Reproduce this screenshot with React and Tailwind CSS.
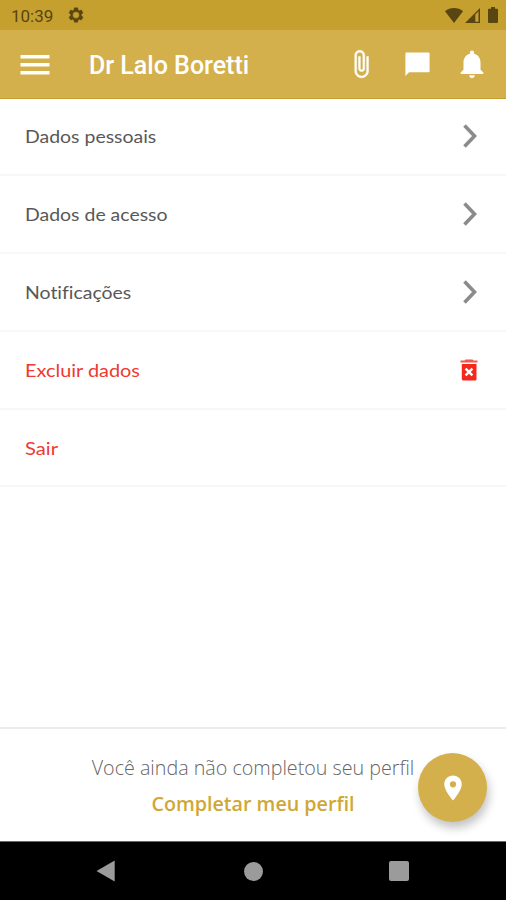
import React from "react";

const LATO = "font-['Lato','Noto_Sans',sans-serif]";

function Icon({ d, className, strokeWidth = 0 }) {
  return (
    <svg viewBox="0 0 24 24" fill="currentColor" stroke="currentColor" strokeWidth={strokeWidth} className={className} aria-hidden="true">
      <path d={d} />
    </svg>
  );
}

function StatusBar() {
  return (
    <div className="flex h-[30px] shrink-0 items-center bg-[#c6a02f] pl-[11px] pr-[8px] text-[#594510]">
      <span className="w-[45px] pt-[2px] text-[17px] leading-none whitespace-nowrap">10:39</span>
      <svg viewBox="0 0 24 24" className="ml-[11px] h-[18px] w-[18px]" fill="currentColor">
        <path
          fillRule="evenodd"
          stroke="currentColor"
          strokeWidth="0.600"
          d="M19.14 12.94a7.1 7.1 0 0 0 0-1.88l2.03-1.58a.5.5 0 0 0 .12-.61l-1.92-3.32a.49.49 0 0 0-.59-.22l-2.39.96a7 7 0 0 0-1.62-.94l-.36-2.54a.48.48 0 0 0-.48-.41h-3.84a.47.47 0 0 0-.47.41l-.36 2.54c-.59.24-1.13.57-1.62.94l-2.39-.96a.48.48 0 0 0-.59.22L2.74 8.87a.47.47 0 0 0 .12.61l2.03 1.58a7.1 7.1 0 0 0 0 1.88l-2.03 1.58a.5.5 0 0 0-.12.61l1.92 3.32c.12.22.37.29.59.22l2.39-.96c.5.38 1.03.7 1.62.94l.36 2.54c.05.24.24.41.48.41h3.84c.24 0 .44-.17.47-.41l.36-2.54a7 7 0 0 0 1.62-.94l2.39.96c.22.08.47 0 .59-.22l1.92-3.32a.47.47 0 0 0-.12-.61zM12 16.500a4.500 4.500 0 1 1 0-9 4.500 4.500 0 0 1 0 9z"
        />
      </svg>
      <div className="ml-auto flex items-center">
        <svg viewBox="0 0 18 15" className="h-[15px] w-[18px]" fill="currentColor">
          <path d="M9 15L0 3.2C2.5 1.1 5.600 0 9 0s6.500 1.100 9 3.200z" />
        </svg>
        <svg viewBox="0 0 16 16" className="ml-[2px] h-[15px] w-[15px]" fill="currentColor">
          <path fillRule="evenodd" d="M0 16L16 0v16zM11 6.800V14.600h3.400V3.400z" />
        </svg>
        <svg viewBox="0 0 10 16" className="ml-[8px] h-4 w-[10px]" fill="currentColor">
          <path d="M3 0h4v1.800h2q1 0 1 1V15q0 1-1 1H1q-1 0-1-1V2.800q0-1 1-1h2z" />
        </svg>
      </div>
    </div>
  );
}

function Header() {
  return (
    <header className="flex h-[69px] shrink-0 items-center border-b border-[#c6a02f] bg-[#d3b04c] pl-5 pr-[17px] text-white">
      <svg viewBox="0 0 30 20" className="mt-px h-5 w-[30px]" fill="currentColor">
        <rect x="0.500" y="0" width="29" height="3.600" rx="0.600" />
        <rect x="0.500" y="8" width="29" height="3.600" rx="0.600" />
        <rect x="0.500" y="16" width="29" height="3.600" rx="0.600" />
      </svg>
      <h1 className="ml-[39px] pt-[3px] text-[25px] leading-none font-medium whitespace-nowrap">Dr Lalo Boretti</h1>
      <div className="ml-auto flex items-center">
        <Icon
          className="h-[30px] w-[30px]"
          strokeWidth={0.35}
          d="M16.5 6v11.500c0 2.210-1.790 4-4 4s-4-1.790-4-4V5a2.500 2.500 0 0 1 5 0v10.500c0 .55-.45 1-1 1s-1-.45-1-1V6H10v9.500a2.500 2.500 0 0 0 5 0V5c0-2.210-1.790-4-4-4S7 2.790 7 5v12.500c0 3.040 2.460 5.500 5.500 5.500s5.500-2.460 5.500-5.500V6h-1.500z"
        />
        <Icon
          className="ml-[27px] h-[29px] w-[29px]"
          d="M21.300 2H2.700c-.4 0-.7.300-.7.700V21.500l3-3h16.300c.4 0 .7-.3.700-.7V2.700c0-.4-.3-.7-.7-.7z"
        />
        <Icon
          className="ml-[23px] h-[34px] w-[34px]"
          d="M12 22c1.100 0 2-.9 2-2h-4c0 1.100.89 2 2 2zm6-6v-5c0-3.070-1.640-5.640-4.500-6.320V4c0-.83-.67-1.500-1.500-1.500s-1.500.67-1.500 1.500v.68C7.630 5.360 6 7.920 6 11v5l-2 2v1h16v-1l-2-2z"
        />
      </div>
    </header>
  );
}

function Chevron() {
  return (
    <svg viewBox="0 0 14 24" className="h-6 w-[14px]" fill="none" stroke="#8b8b8b" strokeWidth="3.600">
      <path d="M1.500 1.500L11.500 12L1.500 22.500" />
    </svg>
  );
}

function Trash() {
  return (
    <svg viewBox="0 0 18 22" className="mr-[-1px] h-[22px] w-[18px]">
      <path d="M5.500 0.500h7l1 1H17.500v2H0.500v-2h4z" fill="#f4574f" />
      <path d="M1.800 5h14.700v15q0 1.500-1.500 1.500H3.300q-1.500 0-1.500-1.500z" fill="#f5281d" />
      <path d="M5.600 9.600l6.800 6.800M12.400 9.600l-6.800 6.800" stroke="#fff" strokeWidth="2.400" />
    </svg>
  );
}

function Row({ label, color, icon, stretch = "scale-x-[1.08]" }) {
  return (
    <div className={`flex h-[77.8px] items-center justify-between border-b-2 border-[#f7f7f7] pl-[25px] pr-[29px] ${color}`}>
      <span className={`${LATO} ${stretch} origin-left text-[18px] leading-none whitespace-nowrap [font-variant-ligatures:none]`}>
        {label}
      </span>
      {icon}
    </div>
  );
}

export default function App() {
  return (
    <div className="flex h-[900px] w-[506px] flex-col overflow-hidden bg-white font-['Roboto',sans-serif]">
      <StatusBar />
      <Header />
      <main className="-mt-[0.5px] flex-1">
        <Row label="Dados pessoais" color="text-[#585858]" icon={<Chevron />} />
        <Row label="Dados de acesso" color="text-[#585858]" icon={<Chevron />} />
        <Row label="Notificações" color="text-[#585858]" icon={<Chevron />} />
        <Row label="Excluir dados" color="text-[#ee3a33]" icon={<Trash />} stretch="scale-x-[1.105]" />
        <Row label="Sair" color="text-[#ee3a33]" stretch="scale-x-[1.12]" />
      </main>
      <footer className="relative flex h-[114px] shrink-0 flex-col items-center border-t-2 border-[#ececec] pt-[25px] font-['Open_Sans',sans-serif]">
        <p className="text-[19.700px] leading-7 font-light whitespace-nowrap text-[#666]">Você ainda não completou seu perfil</p>
        <p className="mt-[8px] text-[19.700px] leading-7 font-semibold whitespace-nowrap text-[#d0a735]">Completar meu perfil</p>
        <button className="absolute top-[24px] right-[19px] flex h-[69px] w-[69px] items-center justify-center rounded-full bg-[#d3b04c] text-white shadow-[2px_6px_10px_rgba(0,0,0,0.24)]">
          <Icon
            className="h-[30px] w-[30px]"
            d="M12 2C8.130 2 5 5.130 5 9c0 5.250 7 13 7 13s7-7.750 7-13c0-3.870-3.130-7-7-7zm0 9.500a2.500 2.500 0 0 1 0-5 2.500 2.500 0 0 1 0 5z"
          />
        </button>
      </footer>
      <nav className="flex h-[59px] shrink-0 items-center border-t border-[#6a6a6a] bg-black pl-[96px] text-[#9b9b9b]">
        <svg viewBox="0 0 19 22" className="h-[22px] w-[19px]" fill="currentColor">
          <path d="M0.500 11L18.700 0.500v21z" />
        </svg>
        <span className="ml-[129px] h-[19px] w-[19px] rounded-full bg-[#9b9b9b]" />
        <span className="ml-[126px] h-[20px] w-[20px] rounded-[2px] bg-[#9b9b9b]" />
      </nav>
    </div>
  );
}
